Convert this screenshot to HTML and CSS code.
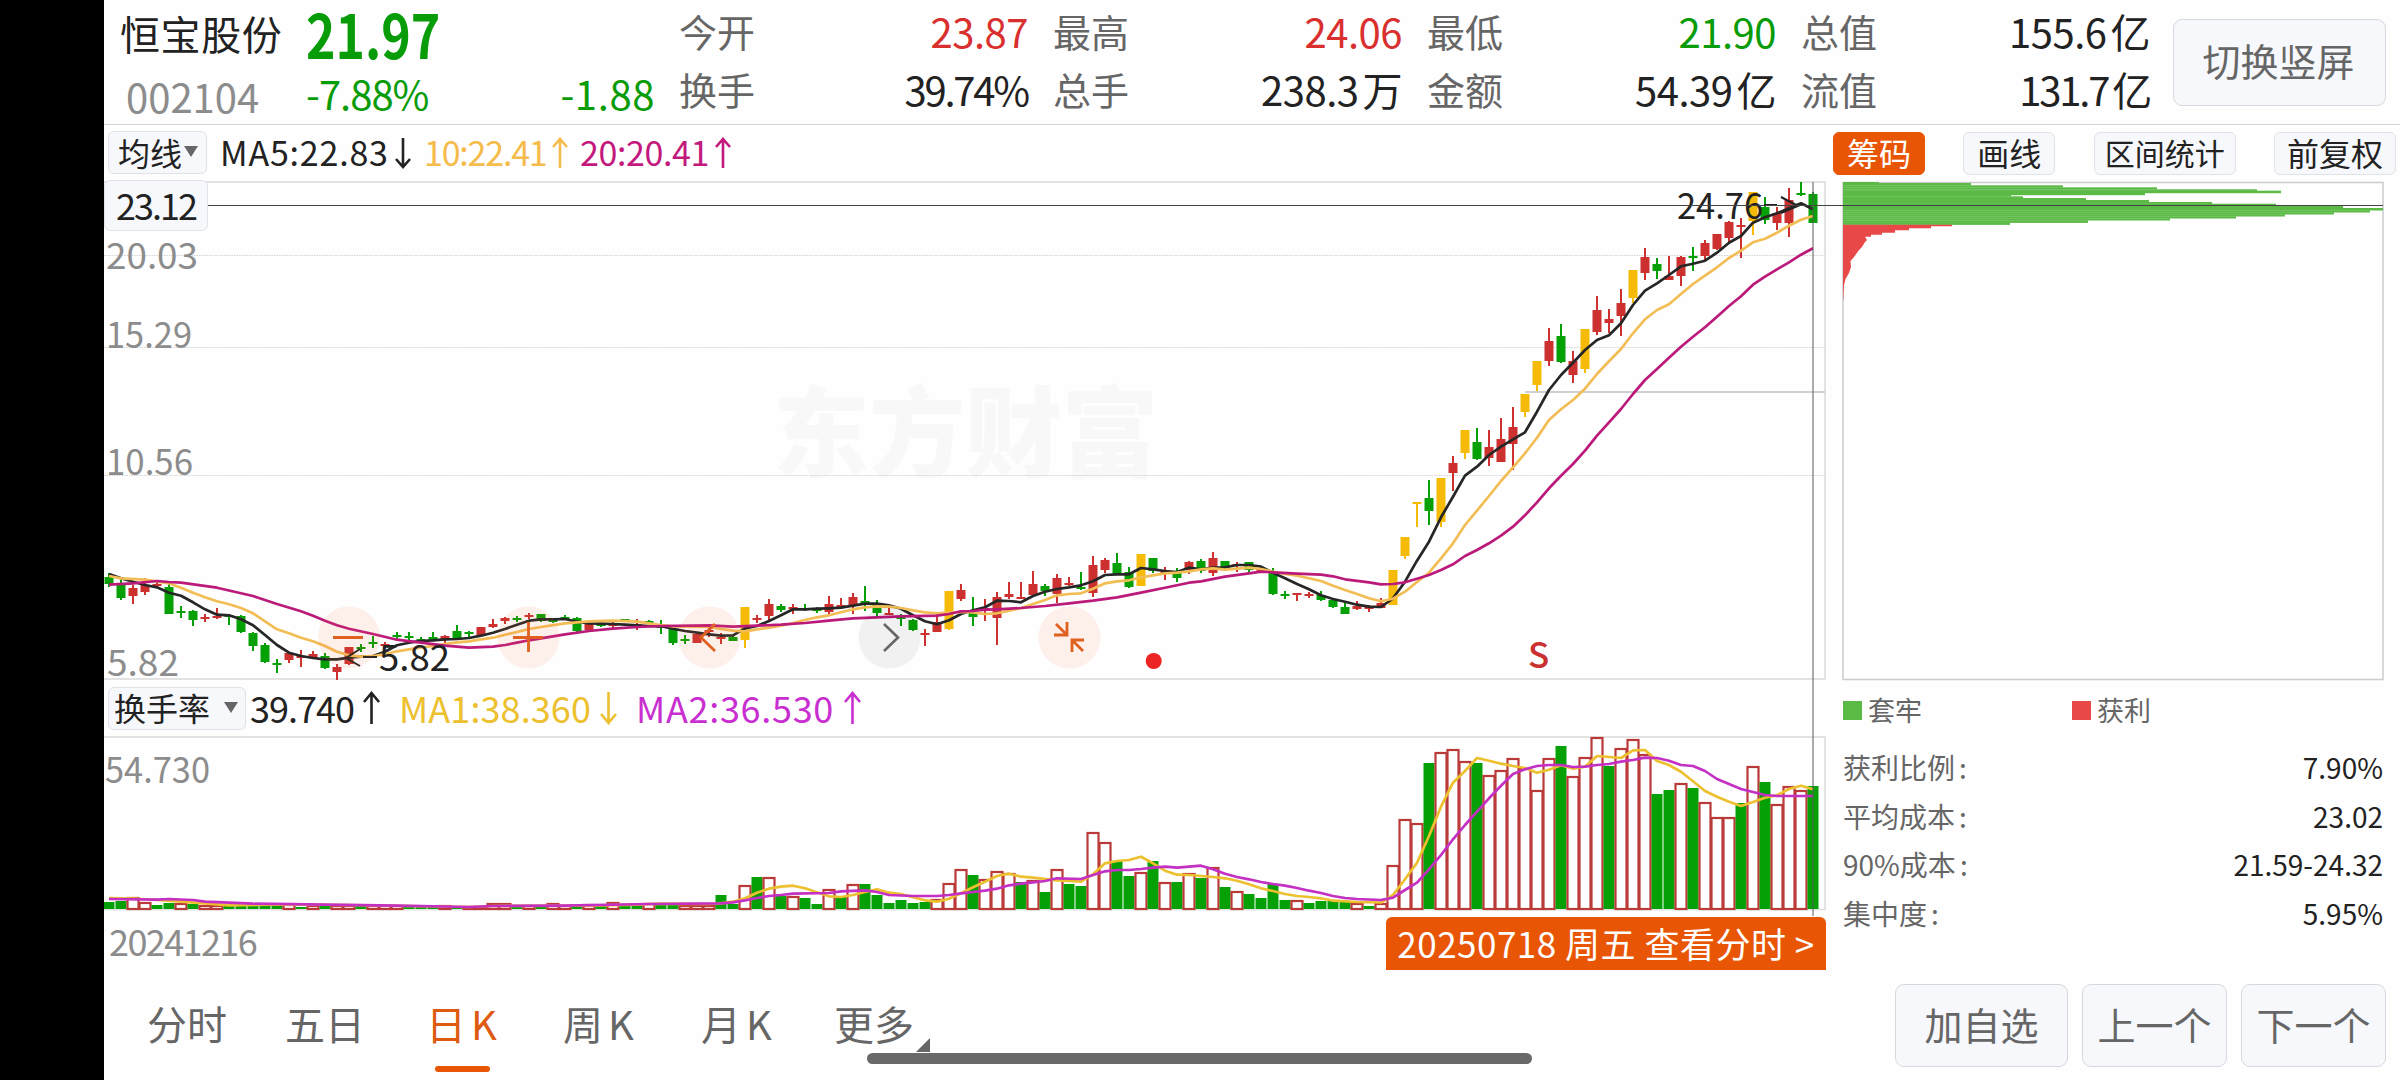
FILE: index.html
```html
<!DOCTYPE html>
<html lang="zh-CN">
  <head>
    <meta charset="UTF-8" />
    <meta name="viewport" content="width=device-width, initial-scale=1.0" />
    <title>恒宝股份 002104</title>
    <link rel="stylesheet" href="styles.css">
  </head>
  <body>
    <div class="app">
      <!-- QUOTE HEADER -->
      <header class="header">
        <div class="stock">
          <div class="stock-name">恒宝股份</div>
          <div class="stock-code">002104</div>
        </div>
        <div class="price">
          <div class="price-now">21.97</div>
          <div class="price-change"><span>-7.88%</span><span class="price-diff">-1.88</span></div>
        </div>
        <div class="quotes">
          <div class="quote"><span>今开</span><b class="red">23.87</b></div>
          <div class="quote"><span>最高</span><b class="red">24.06</b></div>
          <div class="quote"><span>最低</span><b class="green">21.90</b></div>
          <div class="quote"><span>总值</span><b>155.6<i>亿</i></b></div>
          <div class="quote"><span>换手</span><b class="tight">39.74%</b></div>
          <div class="quote"><span>总手</span><b>238.3<i>万</i></b></div>
          <div class="quote"><span>金额</span><b>54.39<i>亿</i></b></div>
          <div class="quote"><span>流值</span><b class="tight">131.7<i>亿</i></b></div>
        </div>
        <button class="btn btn-rotate">切换竖屏</button>
      </header>

      <div class="main">
        <!-- CHARTS -->
        <section class="charts">
          <div class="toolbar">
            <button class="select">均线<i class="caret"></i></button>
            <span class="ma ma5">MA5:22.83</span>
            <svg class="arrow" width="16" height="32" viewBox="0 0 16 32"><path d="M8 1V30M1 22L8 30L15 22" stroke="#222" /></svg>
            <span class="ma ma10">10:22.41</span>
            <svg class="arrow" width="16" height="32" viewBox="0 0 16 32"><path d="M8 31V2M1 10L8 2L15 10" stroke="#f5bb4b" /></svg>
            <span class="ma ma20">20:20.41</span>
            <svg class="arrow" width="16" height="32" viewBox="0 0 16 32"><path d="M8 31V2M1 10L8 2L15 10" stroke="#c3197d" /></svg>
          </div>

          <svg id="kline" class="kline" width="1722" height="500" viewBox="104 181 1722 500"></svg>

          <div class="toolbar toolbar-vol">
            <button class="select select-vol">换手率<i class="caret"></i></button>
            <span class="vol-now">39.740</span>
            <svg class="arrow" width="17" height="34" viewBox="0 0 17 34"><path d="M8.500 33V2M1 11L8.500 2L16 11" stroke="#222" /></svg>
            <span class="vol-ma1">MA1:38.360</span>
            <svg class="arrow" width="17" height="34" viewBox="0 0 17 34"><path d="M8.500 1V32M1 23L8.500 32L16 23" stroke="#ecc02e" /></svg>
            <span class="vol-ma2">MA2:36.530</span>
            <svg class="arrow" width="17" height="34" viewBox="0 0 17 34"><path d="M8.500 33V2M1 11L8.500 2L16 11" stroke="#c92fd0" /></svg>
          </div>

          <svg id="volume" class="volume" width="1722" height="175" viewBox="104 736 1722 175"></svg>

          <div class="dates">
            <span class="date-start">20241216</span>
            <span class="date-badge">20250718 周五 查看分时 &gt;</span>
          </div>
          <div class="cross-x"></div>
          <div class="cross-y"></div>
          <div class="cross-price">23.12</div>
        </section>

        <!-- CHIP DISTRIBUTION -->
        <aside class="chips">
          <div class="chip-tools">
            <button class="chip-btn on">筹码</button>
            <button class="chip-btn">画线</button>
            <button class="chip-btn chip-range">区间统计</button>
            <button class="chip-btn chip-adj">前复权</button>
          </div>
          <svg id="dist" class="dist" width="544" height="500" viewBox="1841 181 544 500"></svg>
          <div class="legend">
            <span><i class="dot dot-green"></i>套牢</span>
            <span><i class="dot dot-red"></i>获利</span>
          </div>
          <div class="stats">
            <div><span>获利比例<em>:</em></span><b>7.90%</b></div>
            <div><span>平均成本<em>:</em></span><b>23.02</b></div>
            <div><span>90%成本<em>:</em></span><b>21.59-24.32</b></div>
            <div><span>集中度<em>:</em></span><b>5.95%</b></div>
          </div>
        </aside>
      </div>

      <!-- PERIOD TABS -->
      <footer class="footer">
        <nav class="tabs">
          <a>分时</a>
          <a>五日</a>
          <a class="k active">日K</a>
          <a class="k">周K</a>
          <a class="k">月K</a>
          <a class="more">更多</a>
        </nav>
        <div class="actions">
          <button class="btn btn-add">加自选</button>
          <button class="btn">上一个</button>
          <button class="btn">下一个</button>
        </div>
      </footer>
      <div class="home-bar"></div>
    </div>
    <script src="script.js"></script>
  </body>
</html>
```
FILE: styles.css
```css
* {
  box-sizing: border-box;
  margin: 0;
  padding: 0;
}

body {
  width: 2400px;
  height: 1080px;
  overflow: hidden;
  background-color: #000;
  font-family: "Noto Sans CJK SC", sans-serif;
  color: #222;
}

button {
  font-family: inherit;
  color: inherit;
}

b,
i,
em {
  font-weight: normal;
  font-style: normal;
}

.app {
  position: relative;
  display: flex;
  flex-direction: column;
  height: 1080px;
  margin-left: 104px;
  background-color: #fefefe;
}

/* header */
.header {
  display: flex;
  height: 125px;
  border-bottom: 1px solid #d4d4d4;
}

.stock {
  width: 202px;
  padding-left: 16px;
}

.stock-name {
  height: 66px;
  line-height: 66px;
  font-size: 40px;
  letter-spacing: 0.6px;
}

.stock-code {
  padding-left: 6px;
  line-height: 60px;
  font-size: 40px;
  color: #8c8c8c;
}

.price {
  width: 373px;
  padding-right: 24px;
  color: #089c08;
}

.price-now {
  height: 64px;
  line-height: 66px;
  font-size: 61px;
  font-weight: 700;
  transform: scaleX(0.82);
  transform-origin: 0 0;
}

.price-change {
  display: flex;
  justify-content: space-between;
  line-height: 58px;
  font-size: 40px;
  letter-spacing: -1px;
}

.price-diff {
  letter-spacing: 0.6px;
}

.quotes {
  display: grid;
  grid-template-columns: repeat(4, 374px);
  grid-template-rows: 58px 58px;
  width: 1494px;
  padding-top: 2px;
}

.quote {
  display: flex;
  justify-content: space-between;
  padding-right: 25px;
  line-height: 58px;
  font-size: 40px;
}

.quote span {
  font-size: 38px;
  color: #666;
}

.quote b {
  letter-spacing: -0.5px;
}

.quote .tight {
  letter-spacing: -2.2px;
}

.quote i {
  margin-left: 4px;
}

.quote .red {
  color: #d9302f;
}

.quote .green {
  color: #089c08;
}

.btn {
  width: 145px;
  height: 83px;
  padding-bottom: 5px;
  border: 1px solid #d5d9de;
  border-radius: 9px;
  background-color: #f7f8fb;
  font-size: 38px;
  color: #666;
}

.btn-rotate {
  flex: none;
  width: 213px;
  height: 87px;
  margin-top: 19px;
  padding-right: 2px;
  padding-bottom: 6px;
}

/* charts */
.main {
  display: flex;
  height: 846px;
}

.charts {
  position: relative;
  width: 1722px;
}

.charts svg,
.chips svg {
  display: block;
}

.toolbar {
  display: flex;
  align-items: center;
  height: 56px;
  padding: 0 0 1px 4px;
}

.toolbar-vol {
  height: 55px;
}

.select {
  display: flex;
  align-items: center;
  justify-content: space-between;
  width: 99px;
  height: 43px;
  padding: 0 8px 2px 9px;
  border: 1px solid #dfe2e6;
  border-radius: 6px;
  background-color: #f7f8fb;
  font-size: 32px;
  line-height: 40px;
}

.select-vol {
  width: 138px;
  padding-left: 5px;
  padding-right: 7px;
}

.caret {
  border: 7px solid transparent;
  border-top: 11px solid #666;
  border-bottom: 0;
}

.arrow {
  flex: none;
  fill: none;
  stroke-width: 2.6;
}

.ma {
  font-size: 34px;
  line-height: 50px;
  padding-bottom: 2px;
  white-space: nowrap;
}

.ma5 {
  width: 175px;
  margin-left: 13px;
  letter-spacing: 0.8px;
}

.ma10 {
  width: 128px;
  margin-left: 13px;
  letter-spacing: -1.2px;
  color: #f5bb4b;
}

.ma20 {
  width: 135px;
  margin-left: 12px;
  letter-spacing: -0.4px;
  color: #c3197d;
}

.vol-now,
.vol-ma1,
.vol-ma2 {
  padding-bottom: 2px;
  font-size: 36px;
  line-height: 50px;
  white-space: nowrap;
}

.vol-now {
  width: 113px;
  margin-left: 4px;
  letter-spacing: -1px;
}

.vol-ma1 {
  width: 201px;
  margin-left: 19px;
  letter-spacing: 0.1px;
  color: #ecc02e;
}

.vol-ma2 {
  width: 208px;
  margin-left: 19px;
  letter-spacing: 0.7px;
  color: #c92fd0;
}

.dates {
  display: flex;
  justify-content: space-between;
  height: 60px;
  font-size: 36px;
}

.date-start {
  padding-left: 5px;
  line-height: 58px;
  letter-spacing: -1.6px;
  color: #8c8c8c;
}

.date-badge {
  width: 440px;
  height: 53px;
  margin-top: 6px;
  border-radius: 6px 6px 0 0;
  background-color: #e85505;
  font-size: 35px;
  line-height: 51px;
  letter-spacing: 0.5px;
  text-align: center;
  color: #fff;
}

.cross-x {
  position: absolute;
  left: 0;
  top: 80px;
  width: 2279px;
  height: 1px;
  background-color: #444;
}

.cross-y {
  position: absolute;
  left: 1708px;
  top: 57px;
  width: 2px;
  height: 734px;
  background-color: rgba(90, 90, 90, 0.5);
}

.cross-price {
  position: absolute;
  left: 0;
  top: 55px;
  width: 104px;
  height: 51px;
  border: 1px solid #dfe2e6;
  border-radius: 6px;
  background-color: #f7f8fb;
  font-size: 36px;
  line-height: 46px;
  letter-spacing: -2px;
  text-align: center;
}

/* chart svg text */
.axis {
  font-size: 36px;
  fill: #8c8c8c;
}

.mark {
  font-size: 36px;
  fill: #222;
}

.watermark {
  font-size: 98px;
  font-weight: 900;
  fill: #f8f8f8;
}

.sell {
  font-size: 35px;
  font-weight: 500;
  fill: #c9302f;
}

/* chip distribution */
.chips {
  width: 574px;
  padding-left: 15px;
}

.chip-tools {
  display: flex;
  justify-content: space-between;
  width: 563px;
  height: 56px;
  margin-left: -8px;
  padding-top: 7px;
}

.chip-btn {
  width: 92px;
  height: 43px;
  padding-bottom: 3px;
  border: 1px solid #dfe2e6;
  border-radius: 6px;
  background-color: #f7f8fb;
  font-size: 32px;
  line-height: 38px;
}

.chip-btn.on {
  border-color: #e85505;
  background-color: #e85505;
  color: #fff;
}

.chip-range {
  width: 142px;
  font-size: 30px;
}

.chip-adj {
  width: 122px;
}

.legend {
  display: flex;
  height: 58px;
  padding-left: 2px;
  font-size: 27px;
  line-height: 56px;
  color: #666;
}

.legend span {
  display: flex;
  align-items: center;
  width: 229px;
}

.dot {
  width: 19px;
  height: 19px;
  margin-right: 6px;
}

.dot-green {
  background-color: #5bba45;
}

.dot-red {
  background-color: #e94848;
}

.stats {
  width: 542px;
  padding: 4px 0 0 2px;
  font-size: 28px;
}

.stats div {
  display: flex;
  justify-content: space-between;
  height: 48.500px;
  line-height: 48.500px;
}

.stats span {
  color: #666;
}

.stats em {
  padding-left: 4px;
}

/* footer */
.footer {
  display: flex;
  justify-content: space-between;
  height: 109px;
  padding: 13px 14px 0 43px;
}

.tabs {
  display: flex;
  font-size: 40px;
  line-height: 78px;
  color: #666;
}

.tabs a {
  position: relative;
  width: 138px;
}

.tabs .k {
  left: -2px;
  letter-spacing: 5px;
}

.tabs .active {
  left: -5px;
  width: 134px;
  margin-left: 8px;
  color: #dd5a10;
}

.tabs .active::after {
  content: "";
  position: absolute;
  left: 9px;
  top: 82px;
  width: 55px;
  height: 6px;
  border-radius: 3px;
  background-color: #e85505;
}

.tabs .more {
  margin-left: -7px;
}

.tabs .more::after {
  content: "";
  position: absolute;
  left: 82px;
  top: 54px;
  width: 0;
  height: 0;
  border-left: 14px solid transparent;
  border-bottom: 14px solid #666;
}

.actions {
  display: flex;
  gap: 14px;
}

.btn-add {
  width: 173px;
}

.home-bar {
  position: absolute;
  left: 763px;
  bottom: 16px;
  width: 665px;
  height: 11px;
  border-radius: 6px;
  background-color: #696969;
}
```
FILE: script.js
```js
// colors
const RED = "#cc3130";
const GREEN = "#05a005";
const YELLOW = "#f5bb08";
const COLORS = { r: RED, g: GREEN, y: YELLOW };

// first bar center and distance between bars
const X0 = 109;
const STEP = 12;

// direction, high, body top, body bottom, low
const candles = `g 573 577 584 587|g 580 585 598 600|r 585 588 596 604|r 578 585 592 595|r 581 584 586 587
g 584 587 614 614|g 606 611 613 618|g 610 611 620 626|r 614 617 619 622|r 608 616 618 619
g 614 615 617 625|g 615 616 632 633|g 632 633 646 651|g 643 645 662 663|g 659 663 665 673
r 652 653 660 663|r 650 656 658 667|r 651 654 658 659|g 653 656 668 669|r 664 667 672 680
r 647 647 664 665|g 644 647 649 652|g 636 642 644 648|r 642 644 646 648|g 632 635 637 640
g 632 636 638 640|g 637 639 641 642|g 632 637 640 641|r 635 636 639 643|g 625 631 639 639
g 631 632 634 638|r 627 627 635 635|r 619 624 627 628|r 617 618 621 624|g 616 618 620 622
r 613 615 617 619|g 614 614 621 622|g 618 620 622 623|g 615 617 619 620|g 617 618 631 632
r 623 624 630 631|g 623 623 626 627|r 622 624 626 628|g 619 619 621 622|r 619 624 628 630
g 620 621 623 624|g 620 625 628 634|g 628 629 643 645|g 635 639 641 644|r 633 634 643 643
r 627 630 632 637|r 633 637 639 644|g 635 637 641 641|y 607 607 640 648|r 615 618 620 623
r 599 604 616 620|g 604 606 610 612|r 604 607 609 614|g 604 608 610 611|g 607 609 611 613
r 596 604 612 614|r 598 605 607 609|r 593 597 605 614|g 586 601 603 611|g 600 603 613 616
r 608 613 615 615|g 614 617 619 626|g 619 620 630 631|r 629 633 635 646|r 612 622 632 632
y 591 591 629 630|r 584 590 599 601|g 597 613 617 626|r 599 608 611 621|r 592 597 618 645
r 582 594 597 599|r 582 597 599 599|r 571 584 595 596|g 584 586 591 596|r 574 578 594 603
r 577 583 585 586|g 572 587 589 590|r 556 565 593 597|r 558 560 570 573|g 553 563 574 574
g 567 572 587 588|y 554 554 586 586|g 558 558 571 573|r 567 571 573 580|g 568 572 578 582
r 561 562 570 574|g 559 561 571 573|r 552 558 573 576|g 561 561 567 570|r 562 564 566 572
g 562 562 570 572|r 566 568 572 573|g 568 573 594 595|g 591 594 596 599|r 593 593 595 601
r 592 594 596 598|g 591 595 600 601|g 599 600 607 608|g 603 607 614 614|r 601 606 609 610
r 605 607 609 612|r 598 603 608 608|y 570 570 605 605|y 537 537 556 559|y 502 502 504 527
g 480 498 511 525|y 478 478 522 527|r 456 463 473 491|y 430 430 453 459|g 428 442 459 460
r 430 447 458 466|r 418 439 462 462|r 407 427 444 470|y 394 394 412 417|y 361 361 385 391
r 328 341 361 366|g 324 336 362 363|r 351 361 375 383|y 329 329 369 373|r 296 310 332 335
r 309 319 323 333|r 289 303 316 336|y 270 270 298 303|r 248 257 273 280|g 258 264 271 279
r 256 276 280 280|r 256 257 276 286|g 247 256 258 271|r 240 243 256 260|r 234 234 249 250
r 221 222 238 242|r 218 225 227 258|y 192 192 221 235|g 197 207 220 224|r 207 213 223 230
r 188 200 223 237|g 182 193 195 196|g 192 194 223 223`;

const ma5 = [574, 578.3, 581.7, 585, 587.3, 592.7, 595.7, 602.3, 609.3, 614.7, 615.3, 619.3, 625.3, 635, 645,
  652.7, 656, 658, 659.3, 659.3, 657.7, 656.7, 656, 651.7, 645.3, 642.7, 641, 640.3, 639.3, 639, 638, 635.7,
  632.7, 629, 624.7, 620.7, 619.3, 619.3, 619, 621.7, 623.3, 623.7, 624, 624.7, 625.3, 626, 626.3, 628.7, 631,
  632.7, 634.3, 635.7, 635.3, 628.3, 626, 621, 615.3, 609.3, 609.3, 608.7, 608.3, 607.7, 605.7, 603.7, 603.7,
  605.3, 608.7, 615.3, 621.3, 624.3, 620.3, 614, 610.3, 607.3, 600.7, 601, 602.3, 596, 591.7, 589, 587.3, 585.3,
  581.3, 575, 574.3, 574.3, 568, 569.3, 571, 572, 567.7, 569.3, 567.7, 567.3, 565, 565, 566.7, 572.7, 578.3, 584,
  589.3, 595.3, 599, 601.7, 604.7, 606.7, 607, 598.3, 581.7, 560.7, 541.7, 517.3, 496.7, 475.7, 466.7, 455, 446.7,
  439.3, 432.3, 411.7, 390, 375, 362.7, 350, 340, 335.3, 323.3, 305, 290.7, 283.3, 275, 266.3, 263.7, 260.7,
  252.7, 242.7, 236, 222.7, 217.3, 213.3, 208.3, 203.3, 209.3].map((y, i) => [i, y]);

// "bar index:y" pairs
const ma10 = pairs(`0:576 1:578.3 3:579.7 5:583.3 6:587.7 7:592.7 8:597.3 9:601.3 10:604.3 11:608 12:613.3 13:621.3
14:629.3 15:633.3 16:637.7 17:641.3 18:646 19:651.7 20:655.3 21:656.7 22:656 23:654.3 24:651.3 25:649.3 26:647.3
27:646 28:644 29:642.3 30:641.3 31:639.3 32:637.7 33:634.7 34:632 35:629 36:627 38:623.3 40:621.3 42:620.7 44:621.7
45:623.3 46:625 47:626.3 48:626.7 50:627 51:629 52:630.7 53:631.3 54:629.3 55:627.7 56:625.7 57:623 58:620 59:617.3
60:615.3 61:612.3 62:609.3 63:607.3 64:606.3 65:606.7 66:608 67:610.3 68:612.3 69:613.3 70:612.7 71:612 72:612.3
73:614 74:613.3 75:610.7 76:608 77:604 78:600 79:595.3 80:594 81:593.3 82:588.7 83:583.3 84:581.3 85:580.3 86:577.3
87:575.3 88:573.3 89:572.7 90:571.3 91:569.3 92:568.3 93:569.7 94:568.7 95:567.7 96:569 97:571.7 98:574 99:575.7
100:578.3 101:581 102:585.7 103:590 104:594 105:598.3 106:601.3 107:598.7 108:591.7 109:582 110:572.7 111:558.3
112:543.3 113:525 114:510.7 115:496 116:481 117:467.3 118:453.3 119:437.7 120:420 121:409.3 122:400 123:388.7
124:374 125:361.3 126:349 127:333.3 128:319.3 129:310 130:304.3 131:294 132:284 133:275.7 134:267.3 135:258
136:250.7 137:242.3 138:238.7 139:232.7 140:225.7 141:219.7 142:216`);

const ma20 = pairs(`0:584.7 2:583.3 4:581 5:582 6:582.7 9:587.7 12:596 14:604 16:611.3 17:615.7 18:620.7 19:625.3
20:628.7 22:634 24:639.7 26:642.7 28:645.7 30:647.7 32:646.7 33:645 34:642.7 35:640.3 36:638.3 37:636.3 38:634.3
40:631 42:628.7 44:627 46:626 50:625.3 52:626.7 54:625.7 56:624.7 58:623 60:620.7 62:618.3 64:617.3 66:616.3
69:615.7 70:614 71:611.3 72:611 73:609.7 74:609.3 76:608 78:606 80:603.3 82:600.7 84:597.3 86:592.7 88:587.7
90:582.7 91:581.3 93:576.7 95:573.3 96:571.7 97:572.3 99:573.7 101:574.7 102:576.3 103:579.3 105:582.3 106:584.3
107:584 108:582.3 109:578.7 110:575 111:570 112:564.3 113:556 114:550 115:543.3 116:535.7 117:526.7 118:515.3
119:502.3 120:488.3 121:475.7 122:464 123:450.7 124:435.7 125:422.3 126:409 127:394 128:380 129:369 130:357.7
131:346.7 132:336.7 133:327.3 134:316.7 135:306 136:296.3 137:284.7 138:276.7 139:269.3 140:262.3 141:254.7 142:248.3`);

// turnover bars: direction + top y
const bars = `g902 g901 r898 r903 g905 g903 r904 g904 r906 r906 g906 g906 g906 g903 g906 r905 g907 r906 g906 r906
r906 g906 r906 r906 r906 g906 g907 g907 r906 g907 r907 r907 r904 r904 g906 r906 g906 r904 r906 g906 r905 g905
r903 g905 g905 r904 g905 g905 r906 r906 r906 g895 g904 r886 g877 r878 g896 r897 g898 g904 r890 g897 r885 g884
g895 g903 g900 g903 g902 r900 r884 r870 g875 r880 r872 r874 g882 r881 g892 r870 g884 g886 r833 r843 g861 g876
r873 g861 r883 g882 r874 g878 r868 g887 r892 g894 g898 g884 g900 r901 g903 g901 g901 g902 r904 g906 r904 r866
r820 r824 g763 r753 r750 r762 g763 r776 r771 r759 r769 r791 r759 g746 r777 r758 r738 g766 r749 r740 r755 g794
g790 r784 g788 r803 r818 r818 g803 r767 g782 r805 r787 r791 g786`.split(/\s+/);

const vma1 = pairs(`0:898 2:898.500 4:900 6:901.7 8:903.3 10:905.3 14:904.5 20:905 30:907 32:906 40:905.7 44:904.7 46:903.7
50:904 51:903.3 52:901.7 53:898.3 54:892.7 55:888.7 56:886.7 57:885.7 58:888.3 59:892.3 60:896.3 61:897 62:895
63:892 64:889.3 65:892.7 66:894 67:897.3 68:900.3 69:901.7 70:898.7 71:893.3 72:887.3 73:881.7 74:876 75:873.7
76:876.7 77:877.7 79:880.3 80:881 81:881.7 82:874.3 83:863.3 84:861 85:860 86:856.7 87:863.3 88:870.7 89:874.7
90:875 91:876 92:877 93:878.3 94:880.7 95:884.3 96:888.3 97:891 98:894 99:896 100:897 101:898.3 102:900.7 104:902
106:902.5 107:895 108:879.3 109:862.7 110:836 111:806.7 112:782.7 113:771 114:758 115:760.7 116:763.7 117:766
118:768 119:772.7 120:769.7 121:765.3 122:768.7 123:766.7 124:756 125:757 126:758 127:750.3 128:750 129:761
130:765 131:771.7 132:781.3 133:791 134:796.7 135:801.7 136:806 137:802 138:797.7 139:795.3 140:789 141:785.7 142:789.3`);

const vma2 = pairs(`0:899 4:899.7 5:899 7:900 8:901.7 12:903.7 18:904.7 24:905.7 30:907 32:906 38:905.7 45:904 51:903.3
52:902.3 53:900.3 54:898 55:896 56:895 57:893.7 60:893 61:891.3 63:890.3 64:892 65:895 67:896 69:896 70:895 71:893.3
72:892 73:890.7 74:888.7 75:885.3 76:883.7 77:882.3 78:881 79:878.3 81:879 82:875 83:871.3 84:870 85:870 86:869
87:867.7 88:866.7 89:867.7 90:866.7 91:865.7 92:869.3 93:873.7 94:877 95:879.3 96:882 97:884 98:885.7 99:888
100:890.7 101:893 102:896 103:898 104:899 106:900 107:897.7 108:890 109:882.7 110:869.3 111:855 112:839.3 113:825
114:811.7 115:798.3 116:785.7 117:774 118:769.3 119:766 120:765 121:765 122:767 123:766.7 124:765 125:764 126:761.7
127:760 128:757.7 129:758 130:760.7 131:765 132:766 133:771 134:779 135:784 136:789 137:792 138:795 139:796 142:796`);

// chip profile rows: "y:right edge"
const locked = pairs(`182:1879 183:1971 185.3:2063 187.3:2157 189.3:2257 190.7:2281 193:2145 195:2011 196.3:2023 198:2086
200:2149 202:2212 203.7:2276 205.7:2343 208:2383 210.3:2370 212.3:2334 214.3:2285 216.3:2236 218.3:2170 220.3:2088
222.7:2010 224.7:2010`);

function pairs(str) {
  return str.trim().split(/\s+/).map((p) => p.split(":").map(Number));
}

function x(i) {
  return X0 + i * STEP;
}

function line(points, color, width) {
  const pts = points.map(([i, y]) => x(i) + "," + y).join(" ");
  return `<polyline points="${pts}" fill="none" stroke="${color}" stroke-width="${width}" stroke-linejoin="round"/>`;
}

function rect(left, top, w, h, color) {
  return `<rect x="${left}" y="${top}" width="${w}" height="${h}" fill="${color}"/>`;
}

function text(cls, left, base, width, str) {
  return `<text class="${cls}" x="${left}" y="${base}" textLength="${width}" lengthAdjust="spacingAndGlyphs">${str}</text>`;
}

function stroke(d, color, width) {
  return `<path d="${d}" fill="none" stroke="${color}" stroke-width="${width}"/>`;
}

function drawKline() {
  let out = text("watermark", 773, 469, 385, "东方财富");
  out += stroke("M104 182H1825V679H104", "#e3e3e3", 2);
  [255.5, 347.5, 475.5].forEach((y) => {
    out += `<path d="M104 ${y}H1825" stroke="#d4d4d4" stroke-width="1" stroke-dasharray="1.5 1"/>`;
  });
  out += stroke("M1525 392H1825", "#cfcfcf", 2);

  out += text("axis", 106, 269, 92, "20.03");
  out += text("axis", 106, 348, 86, "15.29");
  out += text("axis", 106, 475, 87, "10.56");
  out += text("axis", 107, 676, 72, "5.82");

  candles.split(/[|\n]/).forEach((row, i) => {
    const [dir, ...v] = row.split(" ");
    const [h, t, b, l] = v.map(Number);
    const c = COLORS[dir];
    out += rect(x(i) - 1, h, 2, l - h, c);
    out += rect(x(i) - 4.5, t, 9, Math.max(b - t, 1.5), c);
  });

  out += line(ma5, "#262626", 2.7);
  out += line(ma10, "#f3bd55", 2.7);
  out += line(ma20, "#bb1a7b", 2.7);

  // highest and lowest marks
  out += text("mark", 1677, 219, 86, "24.76");
  out += stroke("M1764 205H1777M1781 197L1798 206L1781 213", "#222", 2);
  out += text("mark", 379, 671, 71, "5.82");
  out += stroke("M363 657H377M360 649L346 658L360 666", "#222", 2);

  // zoom and move handles
  [349, 528.5, 709.5, 1069.5].forEach((cx) => {
    out += `<circle cx="${cx}" cy="637.500" r="31" fill="#f87030" fill-opacity="0.1"/>`;
  });
  out += `<circle cx="889.5" cy="637.5" r="31" fill="#000" fill-opacity="0.05"/>`;
  out += stroke("M333 637.5H363M513 637.5H543M528.5 622V652", "#e0601f", 2.8);
  out += stroke("M715 624L701 637.5L715 651", "#e0601f", 2.8);
  out += stroke("M884 624L898 637.5L884 651", "#666", 2.6);
  out += stroke("M1056 624L1066 634M1054 635H1067V622M1083 651L1073 641M1084 640H1072V652", "#e0601f", 2.8);

  out += `<circle cx="1153.7" cy="661" r="8" fill="#ee2324"/>`;
  out += `<text class="sell" x="1528" y="668">S</text>`;
  document.getElementById("kline").innerHTML = out;
}

function drawVolume() {
  let out = stroke("M104 737H1825V909.5H104", "#e3e3e3", 2);
  out += text("axis", 105, 783, 105, "54.730");
  bars.forEach((bar, i) => {
    const top = Number(bar.slice(1));
    if (bar[0] === "g") {
      out += rect(x(i) - 5.5, top, 11, 909 - top, GREEN);
    } else {
      const h = Math.max(909 - top, 1);
      out += `<rect x="${x(i) - 5.5}" y="${top}" width="11" height="${h}" fill="#fff" stroke="#b93a38" stroke-width="2.2"/>`;
    }
  });
  out += line(vma1, "#ecc02e", 2.7);
  out += line(vma2, "#c42fc4", 2.7);
  document.getElementById("volume").innerHTML = out;
}

function drawDist() {
  let out = stroke("M1843 182.5H2383V679.5H1843Z", "#cbcbcb", 1.5);
  for (let i = 0; i < locked.length - 1; i++) {
    const [y, right] = locked[i];
    out += rect(1843, y, right - 1843, locked[i + 1][0] - y + 0.2, "#5bba45");
  }
  out += `<path d="M1843 224.7H1952V226.3H1931V228.3H1909V230.3H1895V232.7H1882V234.7H1871V236.7H1865L1867 240L1865 242
    L1862 247L1859 250L1854 257L1850.5 261L1851 267L1849 273L1845.5 279L1844 285L1843.3 300H1843Z" fill="#e94848"/>`;
  document.getElementById("dist").innerHTML = out;
}

drawKline();
drawVolume();
drawDist();
```
